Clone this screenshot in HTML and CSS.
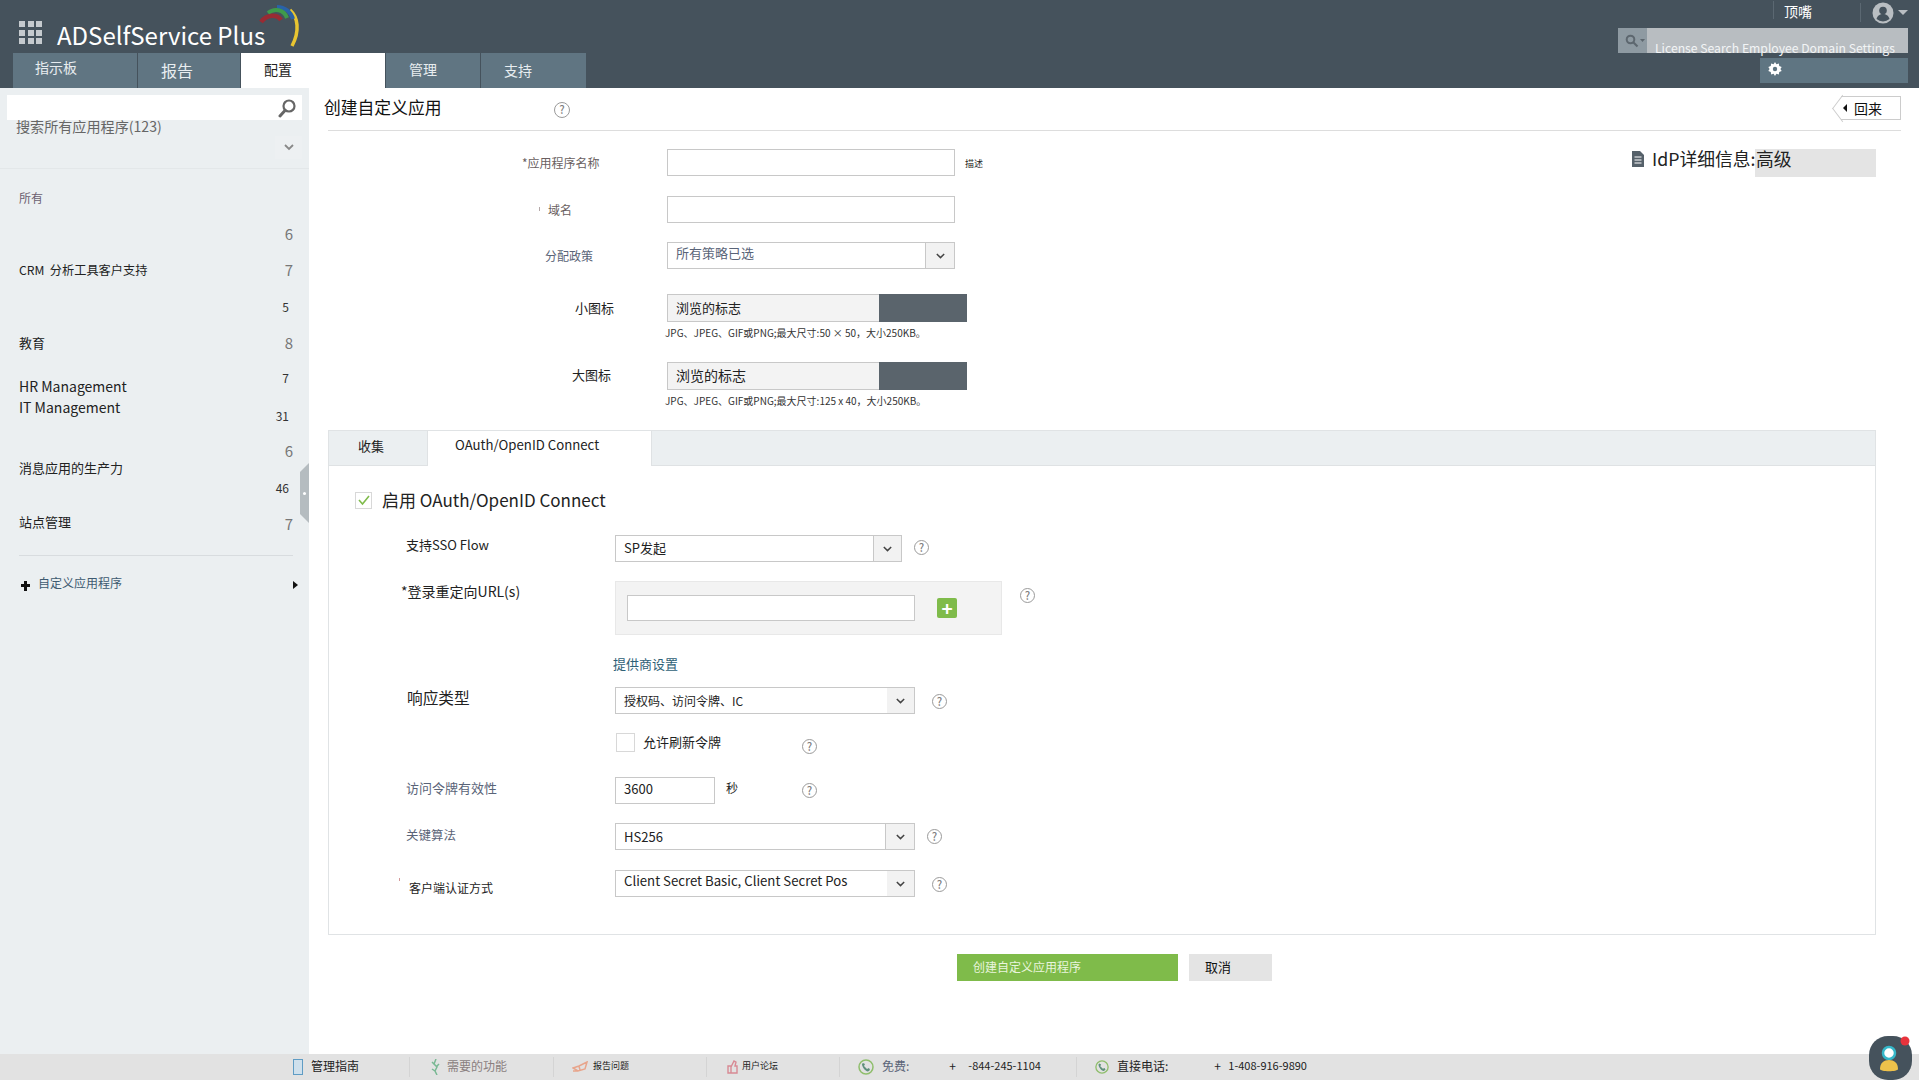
FILE: index.html
```html
<!DOCTYPE html>
<html lang="zh">
<head>
<meta charset="utf-8">
<title>ADSelfService Plus</title>
<link rel="stylesheet" href="styles.css">
</head>
<body>
<div class="page">
  <header class="header">
    <div class="brand-col">
      <div class="brand">
        <div class="apps"><i></i><i></i><i></i><i></i><i></i><i></i><i></i><i></i><i></i></div>
        <span class="product">ADSelfService Plus</span>
        <svg class="swoosh" width="52" height="44" viewBox="0 0 52 44" fill="none">
          <path d="M37 5C45 12 47 26 39 41" stroke="#e8c531" stroke-width="3.5"/>
          <path d="M24 2C32 2 38 7 40 14" stroke="#2a62a8" stroke-width="4"/>
          <path d="M15 8C21 3 31 4 34 13" stroke="#3f9a4b" stroke-width="4"/>
          <path d="M8 17C14 9 24 9 28 15" stroke="#a8252c" stroke-width="4.5" opacity=".85"/>
        </svg>
      </div>
      <nav class="tabs">
        <a class="tab tab-first tab-one">指示板</a>
        <a class="tab tab-big tab-two">报告</a>
        <a class="tab tab-on tab-three">配置</a>
        <a class="tab tab-four">管理</a>
        <a class="tab tab-five">支持</a>
      </nav>
    </div>
    <div class="tools">
      <div class="user-row">
        <span class="user-name">顶嘴</span>
        <span class="avatar-wrap">
          <svg width="22" height="22" viewBox="0 0 22 22"><circle cx="11" cy="11" r="10.5" fill="#b9bec2"/><circle cx="11" cy="8.5" r="3.8" fill="#45525c"/><path d="M4.5 17c1-3.6 3.6-5 6.5-5s5.500 1.400 6.500 5a10 10 0 0 1-13 0z" fill="#45525c"/></svg>
          <i class="caret-down"></i>
        </span>
      </div>
      <div class="search-row">
        <span class="search-scope">
          <svg width="20" height="14" viewBox="0 0 20 14"><circle cx="5.500" cy="5.500" r="3.800" fill="none" stroke="#5d676f" stroke-width="2"/><path d="M8.500 8.500l4 4" stroke="#5d676f" stroke-width="2.200"/><path d="M15 5h5l-2.500 3z" fill="#5d676f"/></svg>
        </span>
        <span class="search-input">License Search Employee Domain Settings</span>
      </div>
      <div class="gear-row">
        <svg width="14" height="14" viewBox="0 0 14 14"><path d="M7 0l1.400 2.200 2.500-.7.300 2.600 2.500.9-1.300 2 1.300 2-2.500.9-.3 2.600-2.500-.7L7 14l-1.400-2.200-2.500.7-.3-2.600-2.500-.9L1.600 7 .3 5l2.500-.9.300-2.600 2.500.7z" fill="#fff"/><circle cx="7" cy="7" r="2.200" fill="#5f7582"/></svg>
      </div>
    </div>
  </header>

  <div class="body">
    <aside class="side">
      <div class="side-search">
        <svg width="20" height="20" viewBox="0 0 20 20" fill="none"><circle cx="12" cy="8" r="5.500" stroke="#666" stroke-width="2.200"/><path d="M8 12.500L3 18" stroke="#666" stroke-width="3" stroke-linecap="round"/></svg>
      </div>
      <div class="side-all">搜索所有应用程序(123)</div>
      <div class="side-chevron-row">
        <span class="side-chevron"><svg width="10" height="7" viewBox="0 0 10 7" fill="none"><path d="M1 1l4 4 4-4" stroke="#888" stroke-width="1.800"/></svg></span>
      </div>
      <div class="side-rule"></div>
      <div class="side-list">
        <div class="names">
          <div class="cat cat-all">所有</div>
          <div class="cat cat-crm">CRM&nbsp; 分析工具客户支持</div>
          <div class="cat cat-edu">教育</div>
          <div class="cat cat-hr">HR Management</div>
          <div class="cat cat-it">IT Management</div>
          <div class="cat cat-msg">消息应用的生产力</div>
          <div class="cat cat-site">站点管理</div>
        </div>
        <div class="counts">
          <div class="num num-a">6</div>
          <div class="num num-b">7</div>
          <div class="num small num-c">5</div>
          <div class="num num-d">8</div>
          <div class="num small num-e">7</div>
          <div class="num small num-f">31</div>
          <div class="num num-g">6</div>
          <div class="num small num-h">46</div>
          <div class="num num-i">7</div>
        </div>
      </div>
      <div class="side-rule2"></div>
      <div class="custom">
        <svg class="custom-plus" width="9" height="10" viewBox="0 0 9 10"><path d="M3 0h3v3h3v3H6v4H3V6H0V3h3z" fill="#111"/></svg>
        <span class="custom-text">自定义应用程序</span>
        <i class="custom-arrow"></i>
      </div>
      <div class="handle"><i></i></div>
    </aside>

    <main class="main">
      <div class="head">
        <h1 class="title">创建自定义应用</h1>
        <span class="help head-help">?</span>
        <a class="back"><i class="back-tri"></i>回来</a>
      </div>
      <div class="rule"></div>

      <div class="top">
        <section class="basic">
          <div class="row row-name">
            <label class="lab lab-name">*应用程序名称</label>
            <div class="field"></div>
            <span class="desc">描述</span>
          </div>
          <div class="row row-domain">
            <label class="lab lab-domain"><i class="speck"></i>域名</label>
            <div class="field"></div>
          </div>
          <div class="row row-policy">
            <label class="lab lab-policy">分配政策</label>
            <div class="select select-s"><span class="val val-policy">所有策略已选</span><span class="chev"><svg viewBox="0 0 11 7" fill="none"><path d="M1 1l4.500 4.500L10 1" stroke="#444" stroke-width="1.800"/></svg></span></div>
          </div>
          <div class="row row-up1">
            <label class="lab lab-small">小图标</label>
            <div class="upload"><span class="up-text">浏览的标志</span><span class="up-btn"></span></div>
          </div>
          <p class="hint hint-one">JPG、JPEG、GIF或PNG;最大尺寸:50 × 50，大小250KB。</p>
          <div class="row row-up2">
            <label class="lab lab-large">大图标</label>
            <div class="upload"><span class="up-text up-text-big">浏览的标志</span><span class="up-btn"></span></div>
          </div>
          <p class="hint hint-two">JPG、JPEG、GIF或PNG;最大尺寸:125 x 40，大小250KB。</p>
        </section>
        <aside class="idp">
          <svg width="12" height="16" viewBox="0 0 12 16"><path d="M0 0h8l4 4v12H0z" fill="#56616a"/><path d="M2.500 6h7M2.500 9h7M2.500 12h7" stroke="#fff" stroke-width="1.200"/></svg>
          <span class="idp-text">IdP详细信息:</span>
          <span class="idp-box">高级</span>
        </aside>
      </div>

      <section class="panel">
        <div class="panel-tabs">
          <span class="ptab">收集</span>
          <span class="ptab ptab-on">OAuth/OpenID Connect</span>
        </div>
        <div class="panel-body">
          <div class="enable">
            <span class="check check-on"><svg width="14" height="12" viewBox="0 0 14 12" fill="none"><path d="M2 6l3.500 4L12 2" stroke="#7fbb4a" stroke-width="1.600"/></svg></span>
            <span class="enable-text">启用 OAuth/OpenID Connect</span>
          </div>

          <div class="orow o-sso">
            <label class="olab olab-sso">支持SSO Flow</label>
            <div class="select select-m"><span class="val val-sso">SP发起</span><span class="chev chev-28"><svg viewBox="0 0 11 7" fill="none"><path d="M1 1l4.500 4.500L10 1" stroke="#444" stroke-width="1.800"/></svg></span></div>
            <span class="help help-sso">?</span>
          </div>
          <div class="orow o-url">
            <label class="olab olab-url">*登录重定向URL(s)</label>
            <div class="url-box">
              <div class="url-input"></div>
              <span class="plus">+</span>
            </div>
            <span class="help help-url">?</span>
          </div>
          <a class="provider">提供商设置</a>
          <div class="orow o-resp">
            <label class="olab olab-resp">响应类型</label>
            <div class="select select-l"><span class="val val-sm">授权码、访问令牌、IC</span><span class="chev chev-27"><svg viewBox="0 0 11 7" fill="none"><path d="M1 1l4.500 4.500L10 1" stroke="#444" stroke-width="1.800"/></svg></span></div>
            <span class="help help-17">?</span>
          </div>
          <div class="orow o-refresh">
            <span class="olab"></span>
            <div class="fixed">
              <span class="check check-off"></span>
              <span class="refresh-text">允许刷新令牌</span>
            </div>
            <span class="help help-0">?</span>
          </div>
          <div class="orow o-access">
            <label class="olab olab-muted">访问令牌有效性</label>
            <div class="fixed">
              <div class="num-input">3600</div>
              <span class="sec">秒</span>
            </div>
            <span class="help help-0">?</span>
          </div>
          <div class="orow o-algo">
            <label class="olab olab-muted olab-algo">关键算法</label>
            <div class="select select-l"><span class="val">HS256</span><span class="chev chev-29"><svg viewBox="0 0 11 7" fill="none"><path d="M1 1l4.500 4.500L10 1" stroke="#444" stroke-width="1.800"/></svg></span></div>
            <span class="help help-12">?</span>
          </div>
          <div class="orow o-client">
            <label class="olab olab-client"><i class="speck speck-client"></i>客户端认证方式</label>
            <div class="select select-l"><span class="val val-client">Client Secret Basic, Client Secret Pos</span><span class="chev chev-27"><svg viewBox="0 0 11 7" fill="none"><path d="M1 1l4.500 4.500L10 1" stroke="#444" stroke-width="1.800"/></svg></span></div>
            <span class="help help-17">?</span>
          </div>
        </div>
      </section>

      <div class="actions">
        <button class="btn btn-go">创建自定义应用程序</button>
        <button class="btn btn-no">取消</button>
      </div>
    </main>
  </div>

  <footer class="foot">
    <div class="f f-guide">
      <svg width="10" height="16" viewBox="0 0 10 16"><rect x=".5" y=".5" width="9" height="15" fill="#cfe0ec" stroke="#5f9cc4"/></svg>
      <span class="f-dark">管理指南</span>
    </div>
    <div class="f f-feature">
      <svg width="9" height="16" viewBox="0 0 9 16" fill="none"><path d="M5 0L3 5l3 3-2 4 2 4M1 3l3 3M8 5L5 8M1 10l3 2" stroke="#79b893" stroke-width="1.500"/></svg>
      <span class="f-soft">需要的功能</span>
    </div>
    <div class="f f-report">
      <svg width="16" height="13" viewBox="0 0 16 13" fill="none"><path d="M1 7l6-2 8-4-2 7-7 2zM1 10h5M7 5l1 4" stroke="#e8a58c" stroke-width="1.500"/></svg>
      <span class="f-tiny">报告问题</span>
    </div>
    <div class="f f-forum">
      <svg width="11" height="14" viewBox="0 0 11 14" fill="none"><path d="M1 6h3v7H1zM4 7l3-6 2 1-1 4h2v7H4" stroke="#d88a94" stroke-width="1.400"/></svg>
      <span class="f-tiny">用户论坛</span>
    </div>
    <div class="f f-free">
      <svg width="16" height="16" viewBox="0 0 16 16" fill="none"><circle cx="8" cy="8" r="7" stroke="#8fbe6c" stroke-width="1.500"/><path d="M5 4l2 1-1 2 3 3 2-1 1 2-2 1.500C7 12 4 8 4 5z" fill="#5f8f7c"/></svg>
      <span class="f-label">免费:</span>
      <span class="f-plus">+</span>
      <span class="f-num">-844-245-1104</span>
    </div>
    <div class="f f-direct">
      <svg width="14" height="16" viewBox="0 0 16 16" fill="none"><circle cx="8" cy="8" r="7" stroke="#8fbe6c" stroke-width="1.500"/><path d="M5 4l2 1-1 2 3 3 2-1 1 2-2 1.500C7 12 4 8 4 5z" fill="#5f8f7c"/></svg>
      <span class="f-label f-label-dark">直接电话:</span>
      <span class="f-plus f-plus-2">+</span>
      <span class="f-num">1-408-916-9890</span>
    </div>
  </footer>

  <div class="chat">
    <svg width="44" height="44" viewBox="0 0 44 44"><rect x="0" y="0" width="43" height="44" rx="19" fill="#45525c"/><circle cx="20" cy="17" r="6" fill="#fff" stroke="#35b7c9" stroke-width="2.500"/><path d="M11 33c0-6 4-9 9-9s9 3 9 9c0 3-18 3-18 0z" fill="#eec14b"/><circle cx="36" cy="5" r="4.500" fill="#e8333c"/></svg>
  </div>
</div>
</body>
</html>
```

FILE: styles.css
```css
* { box-sizing: border-box; }
html, body { margin: 0; height: 100%; }
body { font-family: "Noto Sans CJK SC", "Noto Sans", sans-serif; color: #222; background: #fff; overflow: hidden; }
.page { position: relative; height: 1080px; display: flex; flex-direction: column; }
h1, p { margin: 0; font-weight: 400; }
i { display: block; }
button { font-family: inherit; border: 0; padding: 0; }
label { display: block; }

/* header */
.header { height: 88px; flex: none; background: #45525c; display: flex; justify-content: space-between; }
.brand-col { display: flex; flex-direction: column; }
.brand { height: 53px; display: flex; padding-left: 19px; position: relative; }
.apps { width: 23px; height: 23px; margin-top: 21px; display: grid; grid-template-columns: repeat(3, 6px); grid-template-rows: repeat(3, 6px); gap: 2.500px; }
.apps i { background: #c5cace; }
.product { margin-left: 15px; font-size: 24px; line-height: 34px; margin-top: 18px; color: #fff; white-space: nowrap; }
.swoosh { margin-left: -12px; margin-top: 5px; }
.tabs { display: flex; gap: 1px; padding-left: 13px; height: 35px; }
.tab { background: #607582; color: #e8edf0; font-size: 14px; line-height: 33px; padding-left: 23px; }
.tab-one { width: 124px; padding-left: 22px; line-height: 28px; }
.tab-two { width: 102px; font-size: 16px; line-height: 35px; }
.tab-three { width: 144px; background: #fff; color: #222; }
.tab-four { width: 94px; }
.tab-five { width: 105px; line-height: 35px; }

.tools { width: 301px; padding-right: 11px; display: flex; flex-direction: column; align-items: flex-end; }
.user-row { height: 28px; display: flex; align-items: flex-start; }
.user-name { color: #fff; font-size: 14px; line-height: 20px; margin-top: 1px; padding-left: 10px; width: 87px; border-left: 1px solid #5b6872; height: 18px; }
.avatar-wrap { display: flex; align-items: center; gap: 4px; margin-top: 3px; padding-left: 11px; width: 48px; border-left: 1px solid #5b6872; height: 19px; }
.avatar-wrap svg { flex: none; }
.caret-down { width: 0; height: 0; border-left: 5px solid transparent; border-right: 5px solid transparent; border-top: 5px solid #b9bec2; }
.search-row { display: flex; height: 25px; }
.search-scope { width: 29px; background: #8e9aa2; display: flex; align-items: center; padding-left: 7px; }
.search-input { width: 261px; background: #b8bdc1; color: #f2f4f5; font-size: 12.200px; line-height: 20px; padding: 10px 0 0 8px; white-space: nowrap; }
.gear-row { width: 148px; height: 25px; margin-top: 5px; background: #5f7582; display: flex; align-items: center; padding: 0 0 3px 8px; }

/* layout */
.body { flex: 1; display: flex; min-height: 0; }

/* sidebar */
.side { width: 309px; flex: none; background: #ebeff1; position: relative; }
.side-search { height: 25px; margin: 7px 7px 0; background: #fff; display: flex; justify-content: flex-end; align-items: center; padding-right: 5px; }
.side-all { margin: -4px 0 0 16px; font-size: 14.100px; line-height: 20px; color: #666; position: relative; }
.side-chevron-row { display: flex; justify-content: flex-end; padding-right: 7px; }
.side-chevron { width: 27px; height: 23px; display: flex; align-items: center; justify-content: center; background: #edf0f2; }
.side-rule { height: 1px; margin-top: 9px; background: #e3e7e9; }
.side-list { display: flex; justify-content: space-between; padding: 0 16px 0 19px; }
.cat { line-height: 20px; font-size: 13px; color: #222; white-space: nowrap; }
.cat-all { margin-top: 19px; font-size: 12px; color: #6b5f70; }
.cat-crm { margin-top: 52px; font-size: 12.200px; }
.cat-edu { margin-top: 53px; }
.cat-hr { margin-top: 23px; font-size: 14px; }
.cat-it { margin-top: 1px; font-size: 14px; }
.cat-msg { margin-top: 41px; }
.cat-site { margin-top: 34px; }
.counts { display: flex; flex-direction: column; align-items: flex-end; }
.num { line-height: 20px; font-size: 15px; color: #777; }
.num.small { font-size: 12px; color: #333; margin-right: 4px; }
.num-a { margin-top: 55px; }
.num-b { margin-top: 16px; }
.num-c { margin-top: 17px; }
.num-d { margin-top: 16px; }
.num-e { margin-top: 15px; }
.num-f { margin-top: 18px; }
.num-g { margin-top: 15px; }
.num-h { margin-top: 17px; }
.num-i { margin-top: 16px; }
.side-rule2 { height: 1px; margin: 21px 16px 0 19px; background: #d8dcdf; }
.custom { display: flex; align-items: flex-start; margin-top: 17px; padding: 0 11px 0 21px; line-height: 20px; }
.custom-plus { margin-top: 8px; flex: none; }
.custom-text { margin-left: 8px; font-size: 12px; color: #3d5a70; flex: 1; }
.custom-arrow { margin-top: 8px; width: 0; height: 0; border-top: 4px solid transparent; border-bottom: 4px solid transparent; border-left: 5px solid #111; }
.handle { position: absolute; left: 300px; top: 375px; width: 9px; height: 60px; background: #b5bcc0; clip-path: polygon(100% 0, 100% 100%, 0 85%, 0 15%); display: flex; align-items: center; justify-content: center; }
.handle i { width: 3px; height: 3px; border-radius: 50%; background: #fff; }

/* main */
.main { flex: 1; min-width: 0; padding: 0 18px 0 15px; }
.head { height: 42px; display: flex; align-items: flex-start; }
.title { font-size: 16.800px; line-height: 24px; margin-top: 7px; color: #111; width: 230px; white-space: nowrap; }
.help { flex: none; width: 15px; height: 15px; border-radius: 50%; border: 1.500px solid #9a9a9a; color: #808080; font-size: 11px; line-height: 12px; text-align: center; font-weight: 500; }
.head-help { margin-top: 14px; width: 16px; height: 16px; }
.back { margin: 8px 0 0 auto; width: 60px; height: 24px; border: 1px solid #ccc; border-left: 0; font-size: 14px; line-height: 22px; color: #111; display: flex; align-items: center; padding-left: 2px; position: relative; }
.back::before { content: ""; position: absolute; left: -7px; top: 3px; width: 16px; height: 16px; border-left: 1px solid #ccc; border-bottom: 1px solid #ccc; transform: rotate(45deg) skew(8deg, 8deg); }
.back-tri { width: 0; height: 0; border-top: 4px solid transparent; border-bottom: 4px solid transparent; border-right: 4px solid #111; margin-right: 7px; position: relative; }
.rule { height: 1px; margin-left: 4px; background: #ddd; }

.top { display: flex; justify-content: space-between; margin-left: 4px; height: 299px; }
.basic { width: 700px; }
.row { display: flex; align-items: center; height: 27px; }
.row-name { margin-top: 18px; }
.row-domain { margin-top: 20px; }
.row-policy { margin-top: 19px; }
.row-up1 { margin-top: 25px; height: 28px; }
.row-up2 { margin-top: 23px; height: 28px; }
.lab { width: 339px; font-size: 12px; line-height: 20px; color: #6a5f5f; flex: none; position: relative; }
.lab-name { padding-left: 194px; }
.lab-domain { padding-left: 220px; }
.lab-policy { padding-left: 217px; color: #5a6478; margin-top: 1px; }
.lab-small { padding-left: 247px; font-size: 13px; color: #222; margin-top: -1px; }
.lab-large { padding-left: 244px; font-size: 13px; color: #222; margin-top: -3px; }
.speck { position: absolute; left: 211px; top: 7px; width: 1px; height: 4px; background: #b5a9a9; }
.field { width: 288px; height: 100%; border: 1px solid #c8c8c8; }
.desc { margin: 2px 0 0 10px; font-size: 9px; color: #222; }
.select { height: 100%; border: 1px solid #c8c8c8; display: flex; justify-content: space-between; align-items: center; background: #fff; }
.select-s { width: 288px; }
.select-m { width: 287px; }
.select-l { width: 300px; }
.val { padding-left: 8px; font-size: 13px; line-height: 20px; color: #222; white-space: nowrap; }
.val-policy { color: #5a6478; margin-top: -5px; }
.val-sm { font-size: 12px; }
.val-sso { margin-top: -2px; }
.val-client { font-size: 13.200px; margin-top: -6px; }
.chev { width: 29px; height: 100%; background: #f2f2f2; border-left: 1px solid #c8c8c8; display: flex; align-items: center; justify-content: center; flex: none; }
.chev svg { width: 9px; height: 6px; }
.chev-28 { width: 28px; }
.chev-27 { width: 27px; border-left: 0; }
.chev-29 { width: 29px; }
.upload { display: flex; width: 300px; height: 100%; border-left: 1px solid #c8c8c8; border-top: 1px solid #c8c8c8; border-bottom: 1px solid #c8c8c8; background: #f3f3f3; }
.up-text { width: 211px; padding-left: 8px; font-size: 13px; line-height: 26px; color: #222; }
.up-text-big { font-size: 14px; line-height: 24px; }
.up-btn { width: 88px; margin: -1px 0; background: #5a646c; }
.hint { font-size: 10px; line-height: 12px; color: #333; padding-left: 337px; white-space: nowrap; }
.hint-one { margin-top: 5px; }
.hint-two { margin-top: 5px; }
.idp { width: 244px; margin: 18px 25px 0 0; display: flex; align-items: flex-start; height: 28px; }
.idp svg { margin-top: 2px; flex: none; }
.idp-text { margin-left: 8px; width: 103px; font-size: 17.800px; line-height: 18px; color: #222; white-space: nowrap; }
.idp-box { width: 121px; height: 28px; background: #e4e4e4; font-size: 17.800px; line-height: 18px; color: #222; padding-left: 1px; }

/* panel */
.panel { margin: 0 25px 0 4px; height: 505px; border: 1px solid #e0e3e5; border-top: 0; }
.panel-tabs { height: 36px; display: flex; background: #ebeff1; border-top: 1px solid #e0e3e5; border-bottom: 1px solid #dfe2e4; }
.ptab { width: 98px; padding-left: 29px; font-size: 13px; line-height: 30px; color: #222; }
.ptab-on { width: 225px; height: 35px; padding-left: 27px; background: #fff; border-left: 1px solid #dfe2e4; border-right: 1px solid #dfe2e4; line-height: 27px; white-space: nowrap; font-size: 13.200px; }
.panel-body { padding-top: 26px; }
.enable { display: flex; align-items: center; height: 16px; padding-left: 26px; }
.check { flex: none; display: flex; align-items: center; justify-content: center; background: #fff; }
.check-on { width: 17px; height: 17px; border: 1.500px solid #d8d8d8; }
.check-off { width: 19px; height: 19px; border: 1.500px solid #d8d8d8; margin-left: 1px; }
.enable-text { margin-left: 10px; font-size: 17px; line-height: 20px; color: #222; white-space: nowrap; }
.orow { display: flex; align-items: flex-start; height: 27px; }
.olab { width: 286px; flex: none; font-size: 13px; line-height: 20px; color: #222; position: relative; white-space: nowrap; }
.olab-sso { padding-left: 77px; }
.olab-url { padding-left: 72px; font-size: 14px; }
.olab-resp { padding-left: 78px; font-size: 15.700px; margin-top: 1px; }
.olab-muted { padding-left: 77px; color: #5a6478; margin-top: 1px; }
.olab-algo { margin-top: 2px; font-size: 12.500px; }
.olab-client { padding-left: 80px; font-size: 12px; margin-top: 8px; }
.speck-client { left: 70px; top: 0; height: 3px; background: #d49a9a; }
.o-sso { margin-top: 27px; }
.o-url { margin-top: 19px; height: 54px; }
.o-resp { margin-top: 13px; }
.o-refresh { margin-top: 19px; height: 19px; }
.o-access { margin-top: 25px; }
.o-algo { margin-top: 19px; }
.o-client { margin-top: 20px; }
.help-sso { margin: 5px 0 0 12px; }
.help-url { margin: 7px 0 0 18px; }
.help-17 { margin: 7px 0 0 17px; }
.help-12 { margin: 6px 0 0 12px; }
.help-0 { margin: 6px 0 0 0; }
.url-box { width: 387px; height: 54px; background: #f3f3f3; border: 1px solid #e8e8e8; display: flex; padding: 13px 0 0 11px; }
.url-input { width: 288px; height: 26px; background: #fff; border: 1px solid #c8c8c8; }
.plus { width: 20px; height: 20px; margin: 3px 0 0 22px; background: #7fbb4a; border-radius: 2px; color: #fff; font-size: 19px; line-height: 19px; text-align: center; font-weight: 700; }
.provider { display: block; margin: 19px 0 0 284px; font-size: 13px; line-height: 20px; color: #2f6177; }
.fixed { width: 187px; flex: none; display: flex; align-items: flex-start; height: 100%; }
.refresh-text { margin-left: 8px; font-size: 13px; line-height: 18px; color: #222; }
.num-input { width: 100px; height: 100%; border: 1px solid #c8c8c8; padding-left: 8px; font-size: 13px; line-height: 22px; color: #222; }
.sec { margin-left: 11px; font-size: 12px; line-height: 22px; color: #222; }

.actions { display: flex; gap: 11px; margin: 19px 0 0 633px; }
.btn { height: 27px; font-size: 12px; line-height: 25px; text-align: left; padding: 0 0 2px 16px; }
.btn-go { width: 221px; background: #7fbb4a; color: #e9f5dd; }
.btn-no { width: 83px; background: #e4e4e4; color: #111; font-size: 13px; }

/* footer */
.foot { height: 26px; flex: none; background: #e2e2e2; display: flex; align-items: center; padding-left: 293px; }
.f { height: 20px; display: flex; align-items: center; border-right: 1px solid #d4d4d4; white-space: nowrap; }
.f > span { margin-bottom: 4px; }
.f-guide { width: 117px; gap: 8px; }
.f-feature { width: 144px; padding-left: 21px; gap: 7px; }
.f-report { width: 153px; padding-left: 18px; gap: 5px; }
.f-forum { width: 133px; padding-left: 20px; gap: 4px; }
.f-free { width: 237px; padding-left: 18px; }
.f-direct { padding-left: 18px; border-right: 0; }
.f-dark { font-size: 12px; color: #222; }
.f-soft { font-size: 12px; color: #8a7f7f; }
.f-tiny { font-size: 9px; color: #222; }
.f-label { margin-left: 8px; font-size: 12px; color: #5a6478; }
.f-label-dark { color: #222; }
.f-plus { margin-left: 40px; width: 19px; font-size: 12px; color: #222; flex: none; }
.f-plus-2 { margin-left: 46px; width: 14px; }
.f-num { font-size: 11px; color: #222; }

.chat { position: absolute; right: 6px; bottom: 0; width: 44px; height: 44px; }
```
